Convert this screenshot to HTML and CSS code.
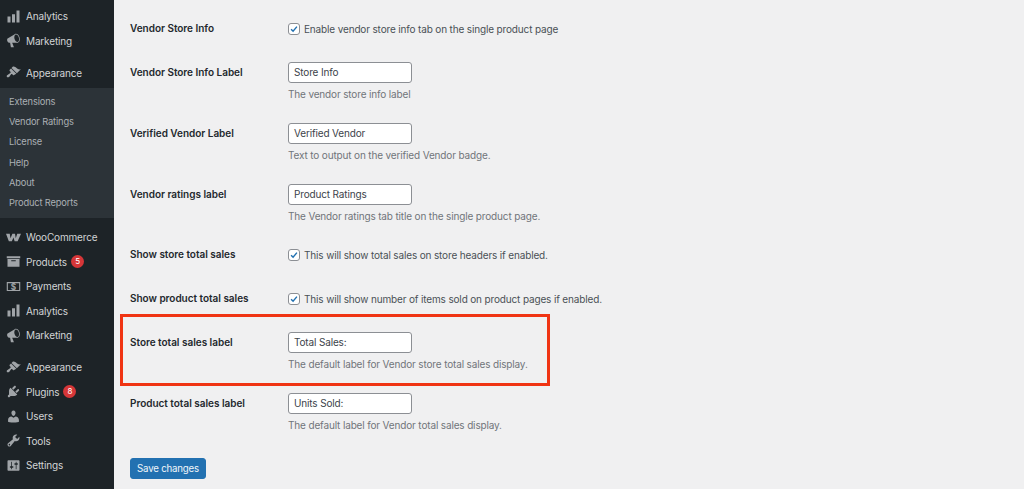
FILE: index.html
```html
<!DOCTYPE html>
<html lang="en">
<head>
  <meta charset="UTF-8">
  <meta name="viewport" content="width=device-width, initial-scale=1.0">
  <link rel="stylesheet" href="styles.css">
  <title>Vendor Settings</title>
</head>
<body>
  <div class="wrap">
    <nav class="sidebar">
      <div class="menu-group first">
        <a class="menu-item"><svg viewBox="0 0 20 20"><path d="M18 18V2h-4v16h4zm-6 0V7H8v11h4zm-6 0v-8H2v8h4z"/></svg>Analytics</a>
        <a class="menu-item"><svg viewBox="0 0 20 20"><path d="M18.15 5.94c.46 1.62.38 3.22-.02 4.48-.42 1.28-1.26 2.18-2.3 2.48-.16.06-.26.06-.4.06-.06.02-.12.02-.18.02-.06.02-.14.02-.22.02h-6.8l2.22 5.5c.02.14-.06.26-.14.34-.08.1-.24.16-.34.16H6.95c-.1 0-.26-.06-.34-.16-.08-.08-.16-.2-.14-.34l-1-5.5H4.25l-.02-.02c-.5.06-1.08-.18-1.54-.62s-.88-1.08-1.06-1.88c-.24-.8-.2-1.56-.02-2.2.18-.62.58-1.08 1.06-1.3l.02-.02 9-5.4c.1-.06.18-.1.24-.16.06-.04.14-.08.24-.12.16-.08.28-.12.5-.18 1.04-.3 2.24.1 3.22.98s1.76 2.24 2.26 3.86zm-2.58 5.98h-.02c.4-.1.74-.34 1.04-.7.58-.7.86-1.76.86-3.04-.02-.64-.1-1.3-.28-1.98-.34-1.36-1.02-2.5-1.78-3.24s-1.68-1.1-2.46-.88c-.38.12-.72.34-.98.7-.6.7-.88 1.76-.88 3.04 0 .64.1 1.3.26 1.98.36 1.36 1.04 2.5 1.8 3.24.78.74 1.62 1.1 2.44.88z"/></svg>Marketing</a>
      </div>
      <div class="menu-group">
        <a class="menu-item"><svg viewBox="0 0 20 20"><path d="M14.48 11.06L7.41 3.99l1.5-1.5c.5-.56 2.3-.47 3.51.32 1.21.8 1.43 1.28 2.91 2.1 1.18.64 2.45 1.26 4.45.85zm-.71.71L6.7 4.7 4.93 6.47c-.39.39-.39 1.02 0 1.41l1.06 1.06c.39.39.39 1.03 0 1.42-.6.6-1.43 1.11-2.21 1.69-.35.26-.7.53-1.01.84C1.43 13.23.4 14.6 1.25 15.9c.77 1.2 2.46.3 3.1-.3.31-.31.58-.66.84-1.01.58-.78 1.09-1.61 1.69-2.21.39-.39 1.03-.39 1.42 0l1.06 1.06c.39.39 1.02.39 1.41 0z"/></svg>Appearance</a>
      </div>
      <div class="submenu">
        <a>Extensions</a>
        <a>Vendor Ratings</a>
        <a>License</a>
        <a>Help</a>
        <a>About</a>
        <a>Product Reports</a>
      </div>
      <div class="menu-group woo">
        <a class="menu-item"><svg viewBox="0 0 20 20"><path d="M0 5h5l1 6 2.500-6h3.500l1 6 2-6h5l-4.500 10h-4l-1.500-5-2.200 5h-4z"/></svg>WooCommerce</a>
        <a class="menu-item"><svg viewBox="0 0 20 20"><path d="M19 3v2.500H1V3h18zM2 6.500h16V17H2V6.500zm11 3V8.300H7v1.200h6z"/></svg>Products<span class="count">5</span></a>
        <a class="menu-item"><svg viewBox="0 0 20 20"><path fill-rule="evenodd" d="M1 4h18v12H1V4zm1.500 1.500v9h15v-9h-15z"/><text x="10" y="14" class="pay-sign">$</text></svg>Payments</a>
        <a class="menu-item"><svg viewBox="0 0 20 20"><path d="M18 18V2h-4v16h4zm-6 0V7H8v11h4zm-6 0v-8H2v8h4z"/></svg>Analytics</a>
        <a class="menu-item"><svg viewBox="0 0 20 20"><path d="M18.15 5.94c.46 1.62.38 3.22-.02 4.48-.42 1.28-1.26 2.18-2.3 2.48-.16.06-.26.06-.4.06-.06.02-.12.02-.18.02-.06.02-.14.02-.22.02h-6.8l2.22 5.5c.02.14-.06.26-.14.34-.08.1-.24.16-.34.16H6.95c-.1 0-.26-.06-.34-.16-.08-.08-.16-.2-.14-.34l-1-5.5H4.25l-.02-.02c-.5.06-1.08-.18-1.54-.62s-.88-1.08-1.06-1.88c-.24-.8-.2-1.56-.02-2.2.18-.62.58-1.08 1.06-1.3l.02-.02 9-5.4c.1-.06.18-.1.24-.16.06-.04.14-.08.24-.12.16-.08.28-.12.5-.18 1.04-.3 2.24.1 3.22.98s1.76 2.24 2.26 3.86zm-2.58 5.98h-.02c.4-.1.74-.34 1.04-.7.58-.7.86-1.76.86-3.04-.02-.64-.1-1.3-.28-1.98-.34-1.36-1.02-2.5-1.78-3.24s-1.68-1.1-2.46-.88c-.38.12-.72.34-.98.7-.6.7-.88 1.76-.88 3.04 0 .64.1 1.3.26 1.98.36 1.36 1.04 2.5 1.8 3.24.78.74 1.62 1.1 2.44.88z"/></svg>Marketing</a>
      </div>
      <div class="menu-group">
        <a class="menu-item"><svg viewBox="0 0 20 20"><path d="M14.48 11.06L7.41 3.99l1.5-1.5c.5-.56 2.3-.47 3.51.32 1.21.8 1.43 1.28 2.91 2.1 1.18.64 2.45 1.26 4.45.85zm-.71.71L6.7 4.7 4.93 6.47c-.39.39-.39 1.02 0 1.41l1.06 1.06c.39.39.39 1.03 0 1.42-.6.6-1.43 1.11-2.21 1.69-.35.26-.7.53-1.01.84C1.43 13.23.4 14.6 1.25 15.9c.77 1.2 2.46.3 3.1-.3.31-.31.58-.66.84-1.01.58-.78 1.09-1.61 1.69-2.21.39-.39 1.03-.39 1.42 0l1.06 1.06c.39.39 1.02.39 1.41 0z"/></svg>Appearance</a>
        <a class="menu-item"><svg viewBox="0 0 20 20"><path d="M13.11 4.36L9.87 7.6 8 5.73l3.24-3.24c.35-.34 1.05-.2 1.56.32.52.51.66 1.21.31 1.55zm-8 1.77l.91-1.12 9.01 9.01-1.19.84c-.71.71-2.63 1.16-3.82 1.16H6.14L4.9 17.26c-.59.59-1.54.59-2.12 0-.59-.58-.59-1.53 0-2.12l1.24-1.24v-3.88c0-1.13.4-3.19 1.09-3.89zm7.26 3.97l3.24-3.24c.34-.35 1.04-.21 1.55.31.52.51.66 1.21.31 1.55l-3.24 3.25z"/></svg>Plugins<span class="count">8</span></a>
        <a class="menu-item"><svg viewBox="0 0 20 20"><path d="M10 9.250c-2.270 0-2.730-3.440-2.730-3.440C7 4.020 7.820 2 9.970 2c2.160 0 2.980 2.020 2.710 3.810 0 0-.41 3.440-2.680 3.440zm0 2.570L12.720 10c2.390 0 4.520 2.330 4.520 4.530v2.490s-3.650 1.130-7.240 1.130c-3.650 0-7.240-1.130-7.240-1.130v-2.490c0-2.250 1.940-4.480 4.470-4.480z"/></svg>Users</a>
        <a class="menu-item"><svg viewBox="0 0 20 20"><path d="M16.68 9.77c-1.34 1.34-3.3 1.67-4.95.99l-5.41 6.52c-.99.99-2.59.99-3.58 0s-.99-2.59 0-3.57l6.52-5.42c-.68-1.65-.35-3.61.99-4.95 1.28-1.28 3.12-1.62 4.72-1.06l-2.89 2.89 2.82 2.82 2.86-2.87c.53 1.58.18 3.39-1.08 4.65zM3.81 16.21c.4.39 1.04.39 1.43 0 .4-.4.4-1.04 0-1.43-.39-.4-1.03-.4-1.43 0-.39.39-.39 1.03 0 1.43z"/></svg>Tools</a>
        <a class="menu-item"><svg viewBox="0 0 20 20"><path d="M18 16V4c0-.55-.45-1-1-1H3c-.55 0-1 .45-1 1v12c0 .55.45 1 1 1h14c.55 0 1-.45 1-1zM8 11h1c.55 0 1 .45 1 1s-.45 1-1 1H8v1.500c0 .28-.22.5-.5.5s-.5-.22-.5-.5V13H6c-.55 0-1-.45-1-1s.45-1 1-1h1V5.500c0-.28.22-.5.5-.5s.5.22.5.5V11zm5-2h-1c-.55 0-1-.45-1-1s.45-1 1-1h1V5.500c0-.28.22-.5.5-.5s.5.22.5.5V7h1c.55 0 1 .45 1 1s-.45 1-1 1h-1v5.500c0 .28-.22.5-.5.5s-.5-.22-.5-.5V9z"/></svg>Settings</a>
      </div>
    </nav>

    <main class="content">
      <div class="form-row check-row">
        <div class="field-label">Vendor Store Info</div>
        <label class="check-line"><span class="checkbox"><svg viewBox="0 0 12 12"><path d="M2.500 6.200l2.400 2.500 4.600-5.600"/></svg></span>Enable vendor store info tab on the single product page</label>
      </div>
      <div class="form-row">
        <div class="field-label">Vendor Store Info Label</div>
        <div>
          <div class="text-input">Store Info</div>
          <p class="help">The vendor store info label</p>
        </div>
      </div>
      <div class="form-row">
        <div class="field-label">Verified Vendor Label</div>
        <div>
          <div class="text-input">Verified Vendor</div>
          <p class="help">Text to output on the verified Vendor badge.</p>
        </div>
      </div>
      <div class="form-row last-text-row">
        <div class="field-label">Vendor ratings label</div>
        <div>
          <div class="text-input">Product Ratings</div>
          <p class="help">The Vendor ratings tab title on the single product page.</p>
        </div>
      </div>
      <div class="form-row check-row">
        <div class="field-label">Show store total sales</div>
        <label class="check-line"><span class="checkbox"><svg viewBox="0 0 12 12"><path d="M2.500 6.200l2.400 2.500 4.600-5.600"/></svg></span>This will show total sales on store headers if enabled.</label>
      </div>
      <div class="form-row check-row">
        <div class="field-label">Show product total sales</div>
        <label class="check-line"><span class="checkbox"><svg viewBox="0 0 12 12"><path d="M2.500 6.200l2.400 2.500 4.600-5.600"/></svg></span>This will show number of items sold on product pages if enabled.</label>
      </div>
      <div class="form-row highlighted">
        <div class="field-label">Store total sales label</div>
        <div>
          <div class="text-input">Total Sales:</div>
          <p class="help">The default label for Vendor store total sales display.</p>
        </div>
      </div>
      <div class="form-row">
        <div class="field-label">Product total sales label</div>
        <div>
          <div class="text-input">Units Sold:</div>
          <p class="help">The default label for Vendor total sales display.</p>
        </div>
      </div>
      <button class="save-btn">Save changes</button>
    </main>
  </div>
</body>
</html>
```

FILE: styles.css
```css
html, body {
  margin: 0;
  padding: 0;
  height: 489px;
  overflow: hidden;
}

body {
  font-family: Inter, "Liberation Sans", sans-serif;
  font-size: 10px;
  letter-spacing: -0.15px;
  background-color: #f0f0f1;
  color: #2c3338;
}

.wrap {
  display: flex;
  height: 489px;
}

.sidebar {
  width: 114px;
  flex-shrink: 0;
  background-color: #1d2327;
  color: #d2d4d6;
}

.menu-group {
  margin-top: 7.5px;
}

.menu-group.first {
  margin-top: 0;
  padding-top: 4px;
}

.menu-group.woo {
  margin-top: 7px;
}

.menu-item {
  display: flex;
  align-items: center;
  height: 24.5px;
  padding-left: 6px;
}

.menu-item svg {
  width: 15px;
  height: 15px;
  margin-right: 5px;
  fill: #a0a4a8;
  flex-shrink: 0;
}

.pay-sign {
  font-size: 11px;
  font-weight: 700;
  text-anchor: middle;
}

.count {
  display: inline-block;
  width: 13px;
  height: 13px;
  margin-left: 4px;
  border-radius: 50%;
  background-color: #d63638;
  color: #fff;
  font-size: 8px;
  line-height: 13px;
  text-align: center;
}

.submenu {
  margin-top: 3px;
  padding: 4px 0 5px;
  background-color: #2c3338;
  color: #abb0b4;
  font-size: 9.3px;
}

.submenu a {
  display: block;
  height: 20.200px;
  line-height: 20.200px;
  padding-left: 9px;
}

.content {
  flex: 1;
  padding: 6px 0 0 16px;
}

.form-row {
  display: grid;
  grid-template-columns: 158px 1fr;
  height: 61px;
  padding-top: 12px;
  box-sizing: border-box;
  position: relative;
}

.form-row.check-row {
  height: 44px;
}

.form-row.last-text-row {
  height: 60px;
}

.field-label {
  font-weight: 600;
  letter-spacing: -0.02px;
  line-height: 21px;
  color: #23282d;
}

.check-line {
  display: flex;
  align-items: center;
  height: 21px;
  color: #4a5056;
}

.checkbox {
  display: inline-block;
  width: 10px;
  height: 10px;
  margin-right: 4px;
  border: 1px solid #8c8f94;
  border-radius: 3px;
  background-color: #fff;
}

.checkbox svg {
  display: block;
  width: 10px;
  height: 10px;
  fill: none;
  stroke: #2271b1;
  stroke-width: 1.700;
}

.text-input {
  width: 124px;
  height: 21px;
  box-sizing: border-box;
  padding-left: 5px;
  border: 1px solid #8c8f94;
  border-radius: 3px;
  background-color: #fff;
  line-height: 19px;
  color: #3c434a;
}

.help {
  margin: 4px 0 0;
  line-height: 14px;
  color: #70757a;
}

.highlighted::after {
  content: "";
  position: absolute;
  left: -10.500px;
  top: -6.500px;
  width: 430px;
  height: 72px;
  box-sizing: border-box;
  border: 3px solid #f03413;
}

.save-btn {
  display: block;
  width: 76px;
  height: 21px;
  margin-top: 16px;
  padding: 0;
  border: 1px solid #2271b1;
  border-radius: 3px;
  background-color: #2271b1;
  color: #f0f5fa;
  font: inherit;
  font-size: 9.700px;
  letter-spacing: -0.2px;
  cursor: pointer;
}
```
